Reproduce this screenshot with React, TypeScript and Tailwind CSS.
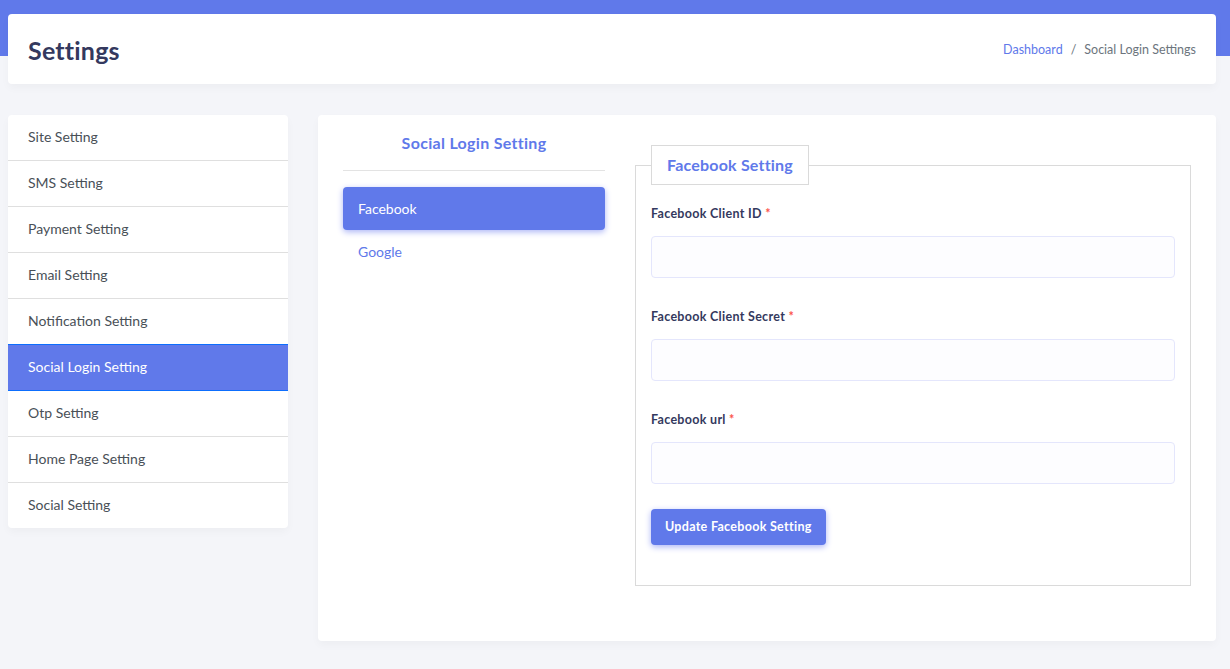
import { useState } from 'react';

const menu = [
  'Site Setting',
  'SMS Setting',
  'Payment Setting',
  'Email Setting',
  'Notification Setting',
  'Social Login Setting',
  'Otp Setting',
  'Home Page Setting',
  'Social Setting',
];

const fields = ['Facebook Client ID', 'Facebook Client Secret', 'Facebook url'];

export default function App() {
  const [active, setActive] = useState('Social Login Setting');
  const [provider, setProvider] = useState('Facebook');

  return (
    <div className="min-h-[669px] bg-[#f4f5f9] font-['Lato','Noto_Sans',sans-serif] relative">
      <div className="h-14 bg-[#6079ea]" />

      {/* header */}
      <div className="relative -mt-[42px] mx-2 w-[1208px] h-[70px] bg-white rounded-[4px] shadow-[0_4px_8px_rgba(0,0,0,0.03)] flex items-center justify-between px-5 pt-[3px]">
        <h1 className="text-[25px] font-bold tracking-[0.2px] text-[#34395e]">Settings</h1>
        <div className="text-[12.5px] flex items-center gap-2">
          <span className="text-[#6079ea]">Dashboard</span>
          <span className="text-[#6c757d]">/</span>
          <span className="text-[#6c757d]">Social Login Settings</span>
        </div>
      </div>

      <div className="flex gap-[30px] mt-[31px] px-2">
        {/* sidebar */}
        <div className="w-[280px] self-start bg-white rounded-[4px] overflow-hidden shadow-[0_4px_8px_rgba(0,0,0,0.03)]">
          {menu.map((m, i) => (
            <div
              key={m}
              onClick={() => setActive(m)}
              className={`flex items-center pl-5 pb-[2px] text-[14px] cursor-pointer ${
                active === m
                  ? 'relative -mt-px h-[47px] bg-[#6079ea] text-white border-y border-[#0d6efd]'
                  : `text-[#495057] border-[#dfdfdf] ${i < menu.length - 1 ? 'h-[46px] border-b' : 'h-[45px]'}`
              }`}
            >
              {m}
            </div>
          ))}
        </div>

        {/* main card */}
        <div className="w-[898px] h-[526px] bg-white rounded-[4px] shadow-[0_4px_8px_rgba(0,0,0,0.03)] flex gap-[30px] pl-[25px] pt-[16px]">
          <div className="w-[262px]">
            <div className="pt-[2px] pb-[17px] leading-[20px] text-center text-[16px] font-bold tracking-[0.3px] text-[#6079ea] border-b border-[#e3e3e3]">
              Social Login Setting
            </div>
            <div className="mt-4 flex flex-col">
              {['Facebook', 'Google'].map((p) => (
                <div
                  key={p}
                  onClick={() => setProvider(p)}
                  className={`h-[43px] flex items-center px-[15px] text-[14px] rounded-[4px] cursor-pointer ${
                    provider === p
                      ? 'bg-[#6079ea] text-white shadow-[0_2px_6px_#acb5f6]'
                      : 'text-[#6079ea]'
                  }`}
                >
                  {p}
                </div>
              ))}
            </div>
          </div>

          <div className="w-[556px] pt-[34px]">
            <div className="relative border border-[#dadada] h-[421px] px-[15px]">
              <div className="absolute left-[15px] -top-[21px] h-[40px] px-[15px] flex items-center bg-white border border-[#dadada] text-[16px] font-bold tracking-[0.2px] text-[#6079ea]">
                Facebook Setting
              </div>
              <div className="pt-[38px]">
                {fields.map((f, i) => (
                  <div key={f} className={i < fields.length - 1 ? 'mb-[29px]' : 'mb-[25px]'}>
                    <label className="block text-[12.5px] leading-[20px] font-bold text-[#34395e] tracking-[0.3px] h-[20px]">
                      {f} <span className="text-[#fc544b]">*</span>
                    </label>
                    <input className="mt-[12px] w-[524px] h-[42px] bg-[#fdfdff] border border-[#e4e6fc] rounded-[4px] outline-none px-3 text-sm" />
                  </div>
                ))}
                <button className="h-[36px] px-[14px] bg-[#6079ea] text-white text-[12.5px] font-bold tracking-[0.3px] rounded-[4px] shadow-[0_2px_6px_#acb5f6]">
                  Update Facebook Setting
                </button>
              </div>
            </div>
          </div>
        </div>
      </div>
    </div>
  );
}
